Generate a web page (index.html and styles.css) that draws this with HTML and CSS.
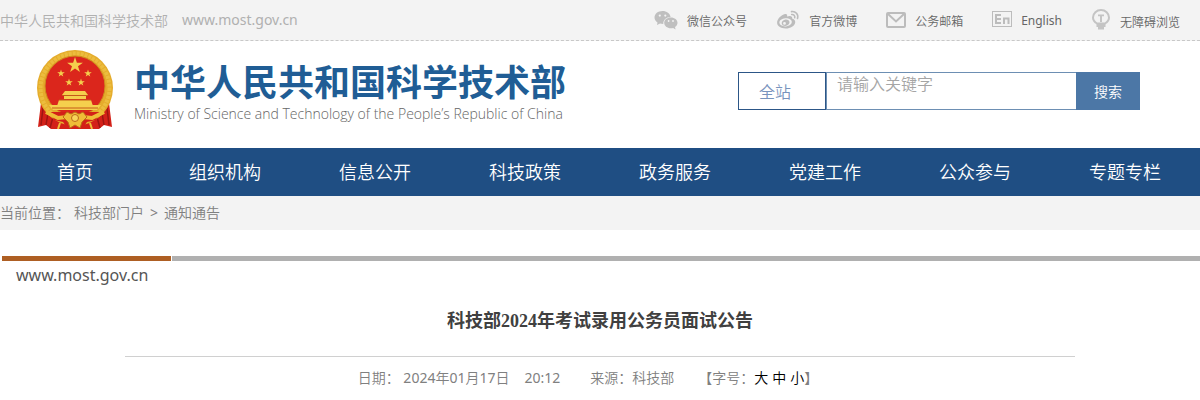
FILE: index.html
```html
<!DOCTYPE html>
<html lang="zh-CN">
<head>
<meta charset="utf-8">
<meta name="viewport" content="width=device-width, initial-scale=1">
<title>科技部2024年考试录用公务员面试公告</title>
<link rel="stylesheet" href="styles.css">
</head>
<body>
<div class="topbar">
  <p class="site"><span>中华人民共和国科学技术部</span><span>www.most.gov.cn</span></p>
  <ul class="tools">
    <li><a href="#"><svg width="24" height="20" viewBox="0 0 24 20" fill="#bfbfbf"><path d="M8.500 1C4 1 .5 3.800.5 7.500c0 2.100 1.200 3.900 3 5L3 15l3-1.500c1 .3 2 .4 3.300.4-.3-4 3-7 7.300-7C16 3.500 12.700 1 8.500 1z"/><path d="M16.800 7.400c-3.800 0-6.600 2.400-6.600 5.400s2.900 5.500 6.600 5.500c.8 0 1.600-.1 2.300-.4l2.500 1.500-.6-2.300c1.500-1 2.500-2.500 2.500-4.300 0-3-2.900-5.400-6.700-5.400z"/><g fill="#f3f3f3"><circle cx="5.800" cy="5.600" r="1.100"/><circle cx="11.300" cy="5.600" r="1.100"/><circle cx="14.600" cy="11" r=".9"/><circle cx="19" cy="11" r=".9"/></g></svg><span>微信公众号</span></a></li>
    <li><a href="#"><svg width="24" height="20" viewBox="0 0 24 20"><path fill="#bcbcbc" fill-rule="evenodd" d="M9 4c1.800-.5 2.600.6 2 2.500 3-1.100 5.800-.7 5.100 2.100 2 .6 3.400 1.800 3.100 3.800-.5 3.500-4.800 6-9.500 6-5 0-8.600-2.300-8.600-5.700C1.100 9 5.200 5 9 4zM9.300 8.300c-3.400.2-6 2.100-5.900 4.500.2 2.300 3 3.800 6.300 3.600 3.400-.2 6.200-2.300 6.100-4.600-.1-2.300-3-3.700-6.500-3.500z"/><path fill="#bcbcbc" fill-rule="evenodd" d="M9.500 9.500c2.300-.2 4.100 1.100 4 3-.1 1.800-2 3.300-4.100 3.400-2.200.1-3.800-1.200-3.700-3 .1-1.700 1.800-3.200 3.800-3.400zM8.500 12a1.400 1.400 0 1 0 0 2.800 1.400 1.400 0 0 0 0-2.800z"/><path fill="none" stroke="#bcbcbc" stroke-width="1.600" stroke-linecap="round" d="M15.500 1.600c4-.7 7.300 2.900 6 6.900M15.700 4.500c1.900-.3 3.500 1.300 3 3.300"/></svg><span>官方微博</span></a></li>
    <li><a href="#"><svg width="20" height="20" viewBox="0 0 20 20" fill="none" stroke="#bcbcbc" stroke-width="2"><rect x="1" y="3" width="18" height="14" rx="1"/><path d="M2 4l8 7.500L18 4"/></svg><span>公务邮箱</span></a></li>
    <li><a href="#"><svg width="20" height="20" viewBox="0 0 20 20" fill="none" stroke="#bcbcbc"><rect x=".5" y="2.500" width="19" height="15"/><path stroke-width="2" d="M9 6H4v8h5M4 10h5M12 15V8.500M12 9.500h4.500V15"/></svg><span>English</span></a></li>
    <li><a href="#"><svg width="20" height="22" viewBox="0 0 20 22"><path fill="none" stroke="#c4c4c4" stroke-width="2" d="M6 14.500C3.500 13 2 11 2 8.500a8 7.500 0 0 1 16 0c0 2.500-1.500 4.500-4 6z"/><path fill="#c4c4c4" d="M5.500 14h9v4h-1.500v2.500H7V18H5.500zM7 5.500h6v1.800h-2V13H9V7.300H7z"/></svg><span>无障碍浏览</span></a></li>
  </ul>
</div>

<header class="header">
  <a class="brand" href="#">
    <svg class="emblem" width="78" height="84" viewBox="0 0 78 84" role="img" aria-label="国徽">
      <path fill="#d32018" d="M5 55L2 79l8-2 5 4 48 0 5-4 8 2-3-24z"/>
      <path fill="none" stroke="#9d1511" stroke-width="1.500" d="M7 60l-2 17M12 65l-2 12M17 69l-3 11M71 60l2 17M66 65l2 12M61 69l3 11"/>
      <circle cx="39" cy="40" r="38" fill="#e5ac2c"/>
      <circle cx="39" cy="40" r="34.500" fill="none" stroke="#ecbd3e" stroke-width="4" stroke-dasharray="3 1"/>
      <circle cx="39" cy="38" r="30" fill="#db261c" stroke="#cf8d1d"/>
      <g fill="#f5cf4d">
        <path d="M39 9l1.900 5.700h6l-4.900 3.600 1.900 5.700-4.900-3.500-4.900 3.500 1.900-5.700-4.900-3.600h6z"/>
        <path id="star" d="M25 21.500l.9 2.700h2.900l-2.400 1.700.9 2.700-2.300-1.700-2.300 1.700.9-2.700-2.400-1.700h2.900z"/>
        <use href="#star" x="27"/><use href="#star" x="8" y="9"/><use href="#star" x="20" y="9"/>
        <path d="M29 43h20l3 4H26zM28 48h22v3H28zM23 52h32l2 6H21zM13 57h52l-4 5H17z"/>
      </g>
      <path stroke="#c55a18" d="M26 47.500h26M23 52h32M16 60h46"/>
      <path fill="#d32018" d="M14 64h50l-4 8-9 2-5 7H32l-5-7-9-2z"/>
      <path fill="none" stroke="#efbd37" stroke-width="4" d="M10 64l12 6 9-1M68 64l-12 6-9-1"/>
      <path fill="#efbd37" stroke="#bd6c16" d="M31 64l4 2 4-2 4 2 4-2 4 5-5 5-2 6-5-3-5 3-2-6-5-5z"/>
      <circle cx="39" cy="70" r="3.500" fill="#f7d45b" stroke="#bb6919"/>
      <path stroke="#f0bd39" stroke-width="2" d="M24 75l-2 6M54 75l2 6"/>
    </svg>
    <span class="names"><strong>中华人民共和国科学技术部</strong><span>Ministry of Science and Technology of the People’s Republic of China</span></span>
  </a>
  <form class="search" role="search">
    <select class="scope" aria-label="搜索范围"><option>全站</option></select>
    <input class="query" type="text" placeholder="请输入关键字" aria-label="关键字">
    <button class="submit" type="button">搜索</button>
  </form>
</header>

<nav class="nav">
  <a href="#">首页</a><a href="#">组织机构</a><a href="#">信息公开</a><a href="#">科技政策</a><a href="#">政务服务</a><a href="#">党建工作</a><a href="#">公众参与</a><a href="#">专题专栏</a>
</nav>
<div class="crumbs"><span class="here">当前位置：</span><a href="#">科技部门户</a><span>&gt;</span><a href="#">通知通告</a></div>

<main>
  <div class="rule"><span class="accent"></span><span class="line"></span></div>
  <p class="domain">www.most.gov.cn</p>
  <article class="article">
    <h1>科技部2024年考试录用公务员面试公告</h1>
    <div class="meta">
      <span>日期： 2024年01月17日</span><span class="time">20:12</span><span class="source">来源：科技部</span>
      <span class="sizes">【字号：<button type="button">大</button><button type="button">中</button><button type="button">小</button>】</span>
    </div>
  </article>
</main>
</body>
</html>
```

FILE: styles.css
```css
* { box-sizing: border-box; }
body {
  margin: 0;
  background: #fff;
  color: #808080;
  font-family: "Noto Sans", "Noto Sans CJK SC DemiLight", "Noto Sans CJK SC", sans-serif;
  font-size: 14px;
}
a { color: inherit; text-decoration: none; }
p, h1, ul { margin: 0; padding: 0; }
svg { display: block; flex: none; }

.topbar {
  display: flex;
  justify-content: space-between;
  align-items: center;
  height: 41px;
  padding-right: 20px;
  background: #f3f3f3;
  border-bottom: 1px dashed #c8c8c8;
}
.site { display: flex; gap: 14px; color: #b0b0b0; }
.tools { display: flex; gap: 29px; list-style: none; color: #666; font-size: 12px; }
.tools a { display: flex; align-items: center; gap: 9px; }
.tools span { padding-top: 3px; }

.header {
  display: flex;
  justify-content: space-between;
  align-items: flex-start;
  height: 107px;
  padding: 7px 60px 0 36px;
}
.brand { display: flex; gap: 20px; }
.names { display: flex; flex-direction: column; padding-top: 8px; white-space: nowrap; }
.names strong { color: #205d95; font-family: "Noto Sans CJK SC", sans-serif; font-size: 36px; line-height: 48px; }
.names span { color: #666; font-family: "Open Sans", sans-serif; font-size: 14px; font-weight: 300; line-height: 20px; }

.search { display: flex; width: 402px; height: 38px; margin-top: 24px; }
.scope, .query, .submit { margin: 0; border-radius: 0; font-family: inherit; }
.scope {
  appearance: none;
  width: 88px;
  padding: 2px 20px 0;
  border: 1px solid #2c5687;
  background: #fff;
  color: #7893bd;
  font-size: 16px;
}
.query {
  flex: 1;
  min-width: 0;
  padding: 0 10px 14px;
  border: 1px solid #6d8fb3;
  border-width: 1px 0 1px 1px;
  background: #fff;
  font-size: 16px;
}
.query::placeholder { color: #a5a5a5; opacity: 1; }
.submit { width: 64px; padding: 0; border: 0; background: #4c77a6; color: #fff; font-size: 14px; }

.nav { display: grid; grid-template-columns: repeat(8, 1fr); background: #1f4e83; }
.nav a { padding-top: 1px; color: #fff; font-size: 18px; line-height: 47px; text-align: center; }

.crumbs { display: flex; gap: 6px; background: #f3f3f3; line-height: 34px; }
.here { margin-right: -2px; }

.rule { display: flex; gap: 1px; height: 5px; margin: 26px 0 0 2px; }
.accent { width: 169px; background: #ae5f23; }
.line { flex: 1; background: #b0b0b0; }
.domain { padding-left: 16px; color: #555; font-size: 16px; line-height: 28px; }

.article { padding: 0 125px; text-align: center; }
.article h1 {
  padding: 18px 0 21px;
  border-bottom: 1px solid #d0d0d0;
  color: #404040;
  font-family: "Liberation Serif", "Noto Sans CJK SC", serif;
  font-size: 18px;
  line-height: 28px;
}
.meta { display: flex; justify-content: center; padding: 11px 24px 0 0; line-height: 20px; }
.time { margin-left: 15px; }
.source { margin-left: 30px; }
.sizes { display: flex; margin-left: 24px; }
.sizes button { margin: 0 4px 0 0; padding: 0; border: 0; background: none; color: #000; font: inherit; }
.sizes button:last-of-type { margin: 0; }
```
